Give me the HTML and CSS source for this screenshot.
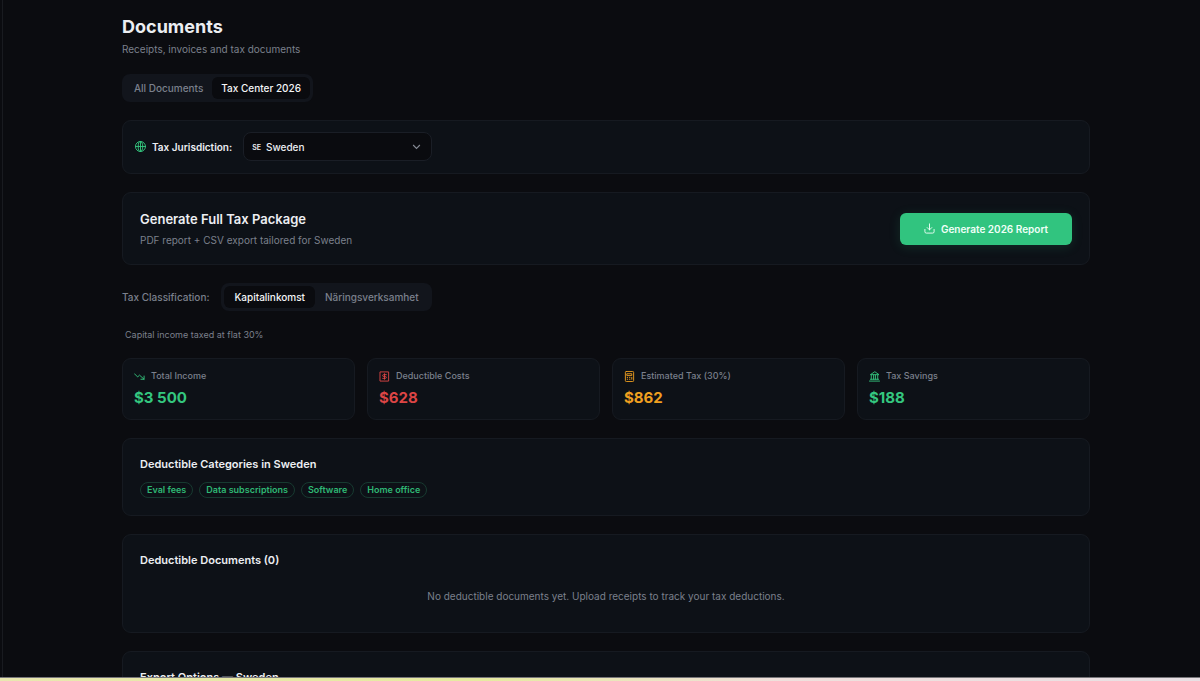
FILE: index.html
```html
<!DOCTYPE html>
<html lang="en">
	<head>
		<meta charset="UTF-8" />
		<meta name="viewport" content="width=device-width, initial-scale=1.0" />
		<title>Documents - Tax Center</title>
		<link rel="stylesheet" href="styles.css">
	</head>

	<body>
		<div class="app">
			<main class="content">
				<header class="page-header">
					<h1>Documents</h1>
					<p>Receipts, invoices and tax documents</p>
				</header>

				<div class="tabs">
					<button class="tab" type="button">All Documents</button>
					<button class="tab active" type="button">Tax Center 2026</button>
				</div>

				<section class="card jurisdiction">
					<svg class="icon green" viewBox="0 0 24 24"><circle cx="12" cy="12" r="11" /><ellipse cx="12" cy="12" rx="5" ry="11" /><path d="M1 12h22M12 1v22" /></svg>
					<label for="country">Tax Jurisdiction:</label>
					<div class="select-box">
						<span class="flag">SE</span>
						<select id="country">
							<option selected>Sweden</option>
						</select>
						<svg class="chevron" viewBox="0 0 24 24"><path d="m3 8 9 9 9-9" /></svg>
					</div>
				</section>

				<section class="card package">
					<div>
						<h2>Generate Full Tax Package</h2>
						<p>PDF report + CSV export tailored for Sweden</p>
					</div>
					<button class="generate" type="button">
						<svg class="icon" viewBox="0 0 24 24"><path d="M12 2v13M7 10l5 5 5-5M2 14v5a3 3 0 0 0 3 3h14a3 3 0 0 0 3-3v-5" /></svg>
						Generate 2026 Report
					</button>
				</section>

				<div class="classification">
					<span>Tax Classification:</span>
					<div class="tabs">
						<button class="tab active" type="button">Kapitalinkomst</button>
						<button class="tab" type="button">Näringsverksamhet</button>
					</div>
				</div>
				<p class="hint">Capital income taxed at flat 30%</p>

				<div class="stats">
					<div class="card stat green">
						<div class="stat-label">
							<svg class="icon" viewBox="0 0 24 24"><path d="M1 6l7 7 4-4 10 9M22 11v7h-7" /></svg>
							<span>Total Income</span>
						</div>
						<strong>$3 500</strong>
					</div>
					<div class="card stat red">
						<div class="stat-label">
							<svg class="icon" viewBox="0 0 24 24"><path d="M3 2h18v20H3zM16 8h-6a2 2 0 0 0 0 4h4a2 2 0 0 1 0 4H8M12 6v12" /></svg>
							<span>Deductible Costs</span>
						</div>
						<strong>$628</strong>
					</div>
					<div class="card stat amber">
						<div class="stat-label">
							<svg class="icon" viewBox="0 0 24 24"><rect x="3" y="1" width="18" height="22" rx="2" /><path d="M7 6h10v4H7zM7 14h1M12 14h1M7 18h1M12 18h1M17 14v4" /></svg>
							<span>Estimated Tax (30%)</span>
						</div>
						<strong>$862</strong>
					</div>
					<div class="card stat green">
						<div class="stat-label">
							<svg class="icon" viewBox="0 0 24 24"><path d="M12 2 3 8h18zM5 9v9M10 9v9M14 9v9M19 9v9M3 18h18M1 22h22" /></svg>
							<span>Tax Savings</span>
						</div>
						<strong>$188</strong>
					</div>
				</div>

				<section class="card panel">
					<h3>Deductible Categories in Sweden</h3>
					<div class="tags">
						<span class="tag">Eval fees</span>
						<span class="tag">Data subscriptions</span>
						<span class="tag">Software</span>
						<span class="tag">Home office</span>
					</div>
				</section>

				<section class="card panel">
					<h3>Deductible Documents (0)</h3>
					<p class="empty">No deductible documents yet. Upload receipts to track your tax deductions.</p>
				</section>

				<section class="card panel">
					<h3>Export Options — Sweden</h3>
				</section>
			</main>
			<div class="bottom-strip"></div>
		</div>
	</body>
</html>
```
FILE: styles.css
```css
* {
	box-sizing: border-box;
}
body {
	margin: 0;
	background: #0b0c10;
	color: #eceef2;
	font-family: Inter, sans-serif;
	font-size: 10px;
	line-height: 16px;
}
h1,
h2,
h3,
p {
	margin: 0;
}
button,
select {
	font: inherit;
	color: inherit;
	border: none;
	background: none;
}
button {
	cursor: pointer;
}
.app {
	display: flex;
	flex-direction: column;
	height: 100vh;
	overflow: hidden;
}
.content {
	flex: 1;
	min-height: 0;
	overflow: hidden;
	margin-left: 2px;
	padding: 16px 110px 0 119px;
	border-left: 1px solid #191b20;
}
.bottom-strip {
	height: 4px;
	border-top: 1px solid #77767a;
	background: linear-gradient(90deg, #e9e7b0, #e6eaa0 40%, #efe0dc 65%, #e8e0e4);
}
.page-header h1 {
	font-size: 18px;
	line-height: 22px;
	font-weight: 700;
}
.page-header p {
	margin-top: 3px;
	color: #7b808c;
}
.tabs {
	display: flex;
	width: fit-content;
	padding: 3px;
	border-radius: 8px;
	background: #12151c;
}
.page-header + .tabs {
	margin: 17px 0 18px;
}
.tab {
	height: 22px;
	padding: 0 9px;
	border-radius: 6px;
	color: #7b808c;
	font-weight: 500;
}
.tab.active {
	background: #0a0b0f;
	color: #f4f5f7;
}
.card {
	border: 1px solid #161a21;
	border-radius: 9px;
	background: #0d1117;
	margin-bottom: 18px;
}
.icon {
	width: 11px;
	height: 11px;
	flex: none;
	fill: none;
	stroke: currentColor;
	stroke-width: 2;
	stroke-linecap: round;
	stroke-linejoin: round;
}
.green {
	color: #34c77f;
}
.red {
	color: #dc4545;
}
.amber {
	color: #f0a020;
}
.jurisdiction {
	display: flex;
	align-items: center;
	padding: 11px 12px 12px;
}
.jurisdiction label {
	margin: 0 11px 0 6px;
	font-weight: 600;
}
.select-box {
	display: flex;
	align-items: center;
	width: 189px;
	height: 29px;
	padding: 0 10px 0 8px;
	border: 1px solid #1a1e26;
	border-radius: 8px;
	background: #0a0b0f;
}
.flag {
	font-size: 7px;
	font-weight: 600;
	line-height: 16px;
	padding-top: 2px;
}
.select-box select {
	flex: 1;
	appearance: none;
	padding: 0 0 0 5px;
	outline: none;
	font-weight: 500;
}
.chevron {
	width: 9px;
	height: 9px;
	fill: none;
	stroke: #858a94;
	stroke-width: 3;
}
.package {
	display: flex;
	align-items: center;
	justify-content: space-between;
	padding: 16px 17px;
}
.package h2 {
	font-size: 13px;
	line-height: 20px;
	font-weight: 600;
}
.package p {
	margin-top: 3px;
	color: #7b808c;
}
.generate {
	display: flex;
	align-items: center;
	justify-content: center;
	gap: 6px;
	width: 172px;
	height: 32px;
	padding: 0;
	border-radius: 6px;
	background: #31c47f;
	color: #f0fff7;
	font-weight: 600;
	box-shadow: 0 2px 12px rgba(49, 196, 127, 0.15);
}
.classification {
	display: flex;
	align-items: center;
	gap: 12px;
	color: #7b808c;
	font-weight: 500;
}
.classification .tab {
	padding: 0 10px;
}
.hint {
	margin: 16px 0 15px 3px;
	font-size: 9px;
	color: #7b808c;
}
.stats {
	display: grid;
	grid-template-columns: repeat(4, 1fr);
	gap: 12px;
	margin-bottom: 18px;
}
.stat {
	margin: 0;
	padding: 9px 11px 10px;
}
.stat-label {
	display: flex;
	align-items: center;
	gap: 6px;
	font-size: 9px;
}
.stat-label span {
	color: #7b808c;
	font-weight: 500;
}
.stat strong {
	display: block;
	margin-top: 3px;
	font-size: 15px;
	line-height: 22px;
	font-weight: 700;
}
.panel {
	padding: 17px;
}
.panel h3 {
	font-size: 11px;
	line-height: 16px;
	font-weight: 600;
}
.tags {
	display: flex;
	gap: 6px;
	margin-top: 10px;
}
.tag {
	padding: 0 6px;
	border: 1px solid #173a30;
	border-radius: 8px;
	color: #2fb874;
	font-size: 9px;
	line-height: 14px;
	font-weight: 600;
}
.empty {
	padding: 20px 0 11px;
	text-align: center;
	color: #7b808c;
}
```
